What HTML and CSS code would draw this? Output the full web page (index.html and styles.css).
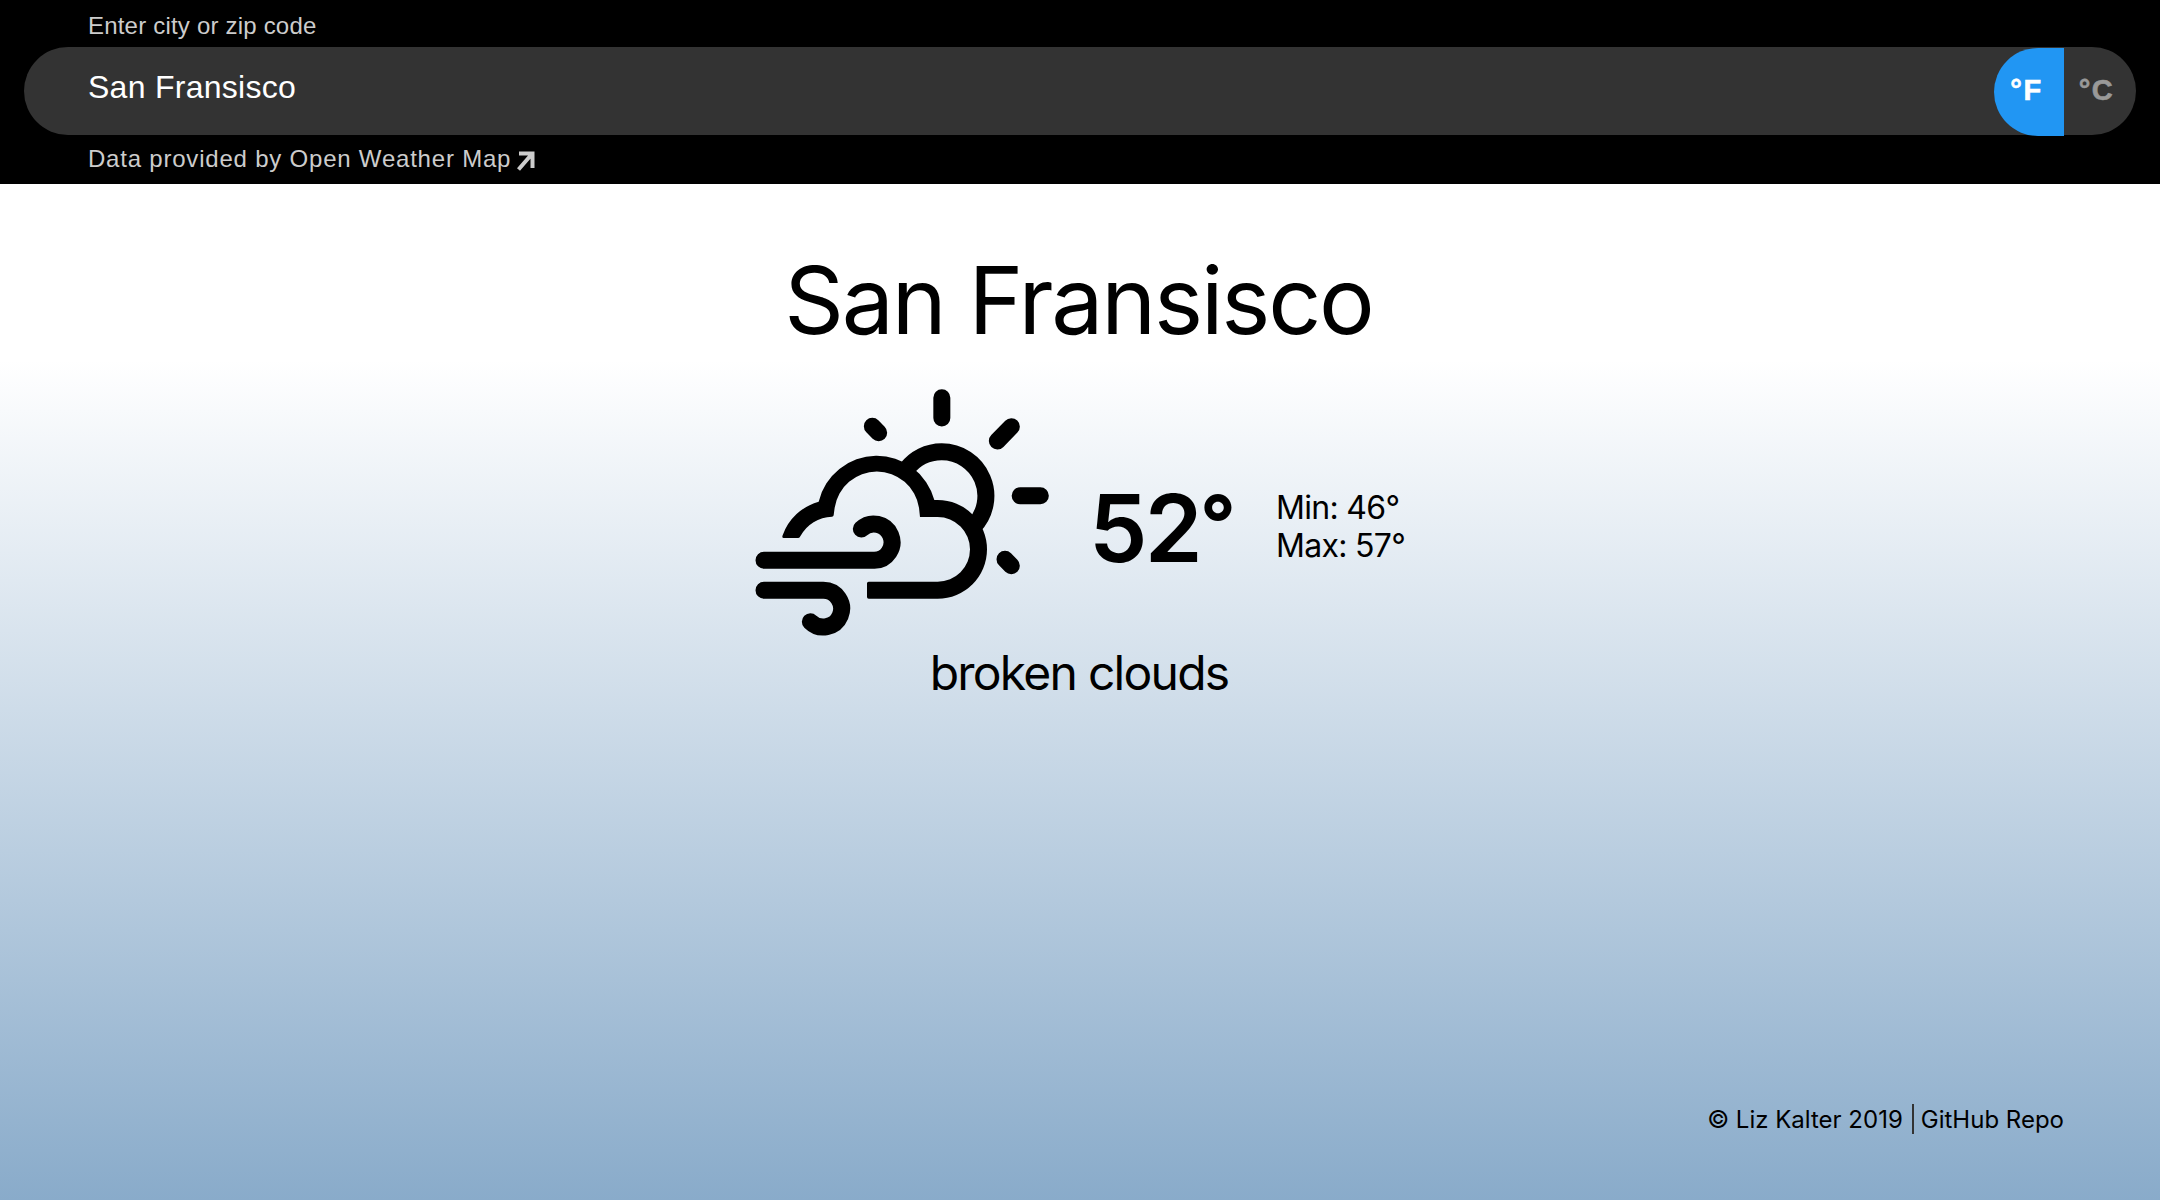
FILE: index.html
```html
<!DOCTYPE html>
<html lang="en">
<head>
<meta charset="utf-8">
<title>Weather</title>
<link rel="stylesheet" href="styles.css">
</head>
<body>
<header class="search">
  <label class="search-label" for="city">Enter city or zip code</label>
  <div class="search-bar">
    <div class="search-value" id="city">San Fransisco</div>
    <div class="units">
      <button class="unit unit-active">°F</button>
      <button class="unit">°C</button>
    </div>
  </div>
  <a class="credit"><span>Data provided by Open Weather Map</span><svg class="arrow" viewBox="0 0 18 20"><path d="M1.500 18.500L14.500 3.500M2 2.500H15.500V17" fill="none" stroke="currentColor" stroke-width="4"/></svg></a>
</header>
<main class="weather">
  <h1 class="city">San Fransisco</h1>
  <section class="now">
    <svg class="icon" viewBox="0 0 960 840">
      <path d="M131 504Q125 504 128 496A160 160 0 0 1 236 395A179 179 0 0 1 583 390H593A148 148 0 0 1 593 686H386Q381 686 381 681V640Q381 635 386 635H593A97 97 0 0 0 593 441H540L537 413A128 128 0 0 0 284 413L281 436Q280 440 276 440A112 112 0 0 0 181 499Q179 504 175 504Z"/>
      <g fill="none" stroke="#000" stroke-width="51">
        <path d="M499.600 297.800A132.500 132.500 0 0 1 605 245.500A132.500 132.500 0 0 1 700.500 470"/>
        <g stroke-linecap="round">
          <path d="M72 571H403A54.500 54.500 0 1 0 364 477"/>
          <path d="M72 661H250A55 55 0 1 1 211 755"/>
          <path d="M605.500 83V144M840.500 377.500H901M814 170L772 213M397 169L416 188M795 568L814 587"/>
        </g>
      </g>
    </svg>
    <div class="temp">52<span class="degree">°</span></div>
    <div class="range">Min: 46°<br>Max: 57°</div>
  </section>
  <p class="summary">broken clouds</p>
</main>
<footer class="footer"><span>© Liz Kalter 2019</span><span class="divider"></span><a>GitHub Repo</a></footer>
</body>
</html>
```
FILE: styles.css
```css
* { box-sizing: border-box; }
body {
  margin: 0;
  height: 1200px;
  display: flex;
  flex-direction: column;
  overflow: hidden;
  color: #000;
  font-family: Inter, "Liberation Sans", sans-serif;
  background: linear-gradient(#fff 30%, #89abca);
}
.search {
  height: 184px;
  padding: 0 24px;
  background: #000;
  color: #ccc;
  font-family: "Liberation Sans", Arial, sans-serif;
}
.search-label {
  display: block;
  height: 47px;
  padding: 12px 0 0 64px;
  font-size: 24px;
  line-height: 28px;
  letter-spacing: 0.2px;
}
.search-bar {
  height: 88px;
  display: flex;
  justify-content: space-between;
  border-radius: 44px;
  background: #333;
}
.search-value {
  padding: 22px 0 0 64px;
  color: #fff;
  font-size: 32px;
  line-height: 37px;
  letter-spacing: 0.27px;
}
.units { display: flex; padding-top: 1px; }
.unit {
  width: 72px;
  height: 88px;
  padding: 0 7px 4px 0;
  border: 0;
  background: none;
  color: #999;
  font: bold 29px/34px "Liberation Sans", Arial, sans-serif;
  letter-spacing: 1.5px;
  -webkit-text-stroke: 0.6px currentColor;
}
.unit-active {
  width: 70px;
  padding-right: 5px;
  border-radius: 44px 0 0 44px;
  background: #2196f3;
  color: #fff;
}
.credit {
  display: flex;
  padding: 10px 0 0 64px;
  font-size: 24px;
  line-height: 28px;
  letter-spacing: 0.79px;
}
.arrow { width: 18px; height: 20px; margin: 6px 0 0 6px; }
.weather { flex: 1; text-align: center; }
.city {
  margin: 58px 3px 0 0;
  font-size: 93px;
  font-weight: 400;
  line-height: 116px;
  letter-spacing: -2.2px;
}
.now {
  display: flex;
  height: 280px;
  margin: 12px 0 0 740px;
  text-align: left;
}
.icon { width: 320px; height: 280px; }
.temp {
  width: 186px;
  padding: 102px 0 0 29px;
  font-size: 93px;
  font-weight: 600;
  line-height: 112px;
  letter-spacing: -2.7px;
}
.degree {
  font-size: 78px;
  font-weight: 700;
  line-height: 0;
  vertical-align: 11px;
}
.range {
  padding: 119px 0 0 30px;
  font-size: 32px;
  line-height: 38px;
  letter-spacing: -0.7px;
}
.summary {
  margin: -6px 2px 0 0;
  font-size: 48px;
  line-height: 58px;
  letter-spacing: -1.75px;
}
.footer {
  display: flex;
  justify-content: flex-end;
  height: 96px;
  padding-right: 96px;
  font-size: 24px;
  line-height: 32px;
}
.divider { width: 2px; height: 30px; margin: 0 7px 0 9px; background: #333; }
```
